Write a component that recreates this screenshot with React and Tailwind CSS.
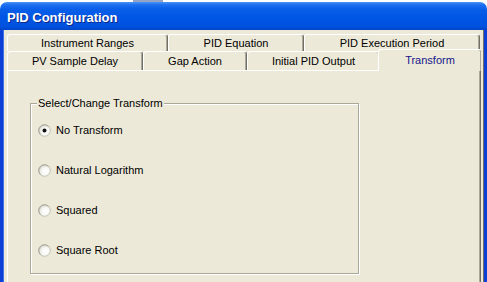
import React from "react";

const Radio = ({ checked }) => (
  <svg width="13" height="13" viewBox="0 0 13 13" className="shrink-0">
    <defs>
      <radialGradient id="rg" cx="0.6" cy="0.6" r="0.6">
        <stop offset="0" stopColor="#ffffff" />
        <stop offset="0.6" stopColor="#f6f6f2" />
        <stop offset="1" stopColor="#d8d6cb" />
      </radialGradient>
    </defs>
    <circle cx="6.5" cy="6.5" r="5.8" fill="url(#rg)" stroke="#c4c2b6" strokeWidth="1" />
    <path d="M2.4 10.6 A5.8 5.8 0 0 1 10.6 2.4" fill="none" stroke="#a9a79b" strokeWidth="1" />
    {checked && <circle cx="6.5" cy="6.5" r="2" fill="#111" />}
  </svg>
);

const Tab = ({ label, w, selected }) => (
  <div
    style={{ width: w }}
    className={
      "flex items-center justify-center rounded-t-[3px] border-t border-l border-r border-t-white border-l-white border-r-[#716f64] shadow-[inset_-1px_0_0_#aca899] bg-[#ECE9D8] " +
      (selected ? "relative z-10 -mx-[2px] -mt-[2px] -mb-[1px] text-[#16168c]" : "")
    }
  >
    {label}
  </div>
);

export default function App() {
  const options = ["No Transform", "Natural Logarithm", "Squared", "Square Root"];

  return (
    <div className="w-[487px] h-[282px] overflow-hidden bg-white flex flex-col font-['Liberation_Sans',Arial,sans-serif] text-[11px] text-black">
      <div className="h-[2px] shrink-0 flex">
        <div className="ml-[133px] w-[30px] bg-[#93a3c6]" />
      </div>

      {/* title bar */}
      <div className="h-[28px] shrink-0 rounded-t-[7px] flex items-center pl-[7px] pt-[3px] bg-[linear-gradient(to_bottom,#4a93f5_0%,#1d6ff0_10%,#0a5fe9_25%,#0056e4_55%,#0052e0_85%,#0046c9_100%)]">
        <span className="text-white font-bold text-[13px] [text-shadow:1px_1px_0_#0b2a8c]">PID Configuration</span>
      </div>

      <div className="flex-1 flex min-h-0">
        <div className="w-[4px] flex">
          <div className="w-[3px] bg-[#0b3fd6]" />
          <div className="w-[1px] bg-[#3f72e4]" />
        </div>

        <div className="flex-1 bg-[#ECE9D8] pt-[4px] pl-[3px] flex flex-col min-h-0 overflow-hidden">
          {/* tabs */}
          <div className="flex h-[17px]">
            <Tab label="Instrument Ranges" w={161} />
            <Tab label="PID Equation" w={136} />
            <Tab label="PID Execution Period" w={176} />
          </div>
          <div className="flex h-[19px]">
            <Tab label="PV Sample Delay" w={136} />
            <Tab label="Gap Action" w={104} />
            <Tab label="Initial PID Output" w={133} />
            <Tab label="Transform" w={104} selected />
          </div>

          {/* panel */}
          <div className="w-[474px] flex-1 border-t border-l border-r border-t-white border-l-white border-r-[#716f64] shadow-[inset_-1px_0_0_#aca899] pl-[22px] pt-[32px]">
            <div className="relative w-[329px] h-[171px] border border-[#aca899] shadow-[inset_1px_1px_0_#fff,1px_1px_0_#fff] pl-[7px] pt-[20px]">
              <div className="absolute -top-[7px] left-[6px] px-[1px] bg-[#ECE9D8] leading-[13px]">
                Select/Change Transform
              </div>
              <div className="flex flex-col gap-[27px]">
                {options.map((o, i) => (
                  <div key={o} className="flex items-center h-[13px] gap-[5px]">
                    <Radio checked={i === 0} />
                    <span>{o}</span>
                  </div>
                ))}
              </div>
            </div>
          </div>
        </div>

        <div className="w-[6px] flex">
          <div className="w-[2px] bg-[#ECE9D8]" />
          <div className="w-[1px] bg-[#716f64]" />
          <div className="w-[3px] bg-[#0b3fd6]" />
        </div>
      </div>
    </div>
  );
}
